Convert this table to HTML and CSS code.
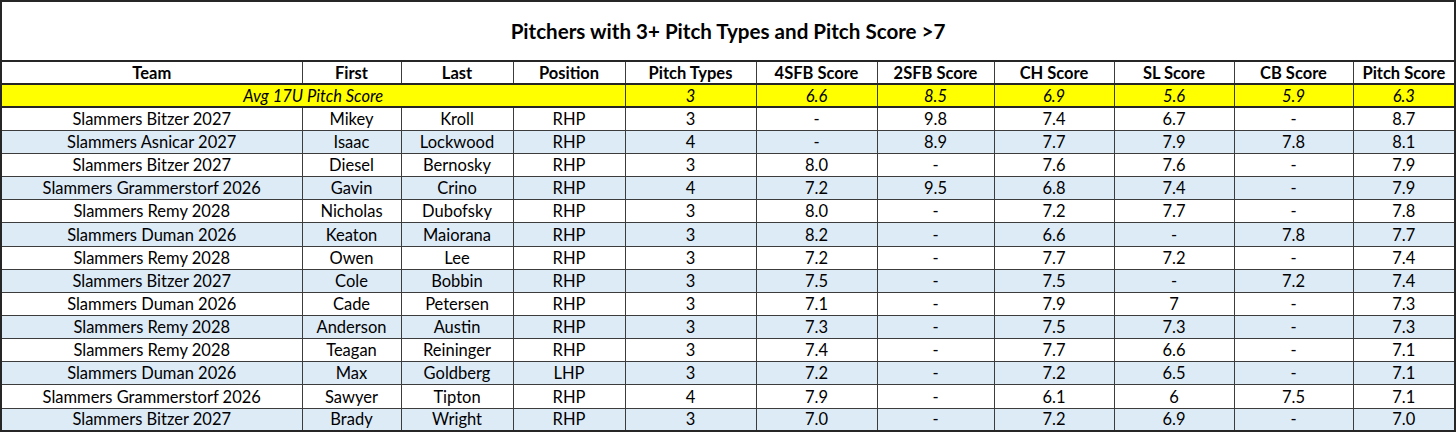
FILE: index.html
```html
<!DOCTYPE html>
<html>
<head>
<meta charset="utf-8">
<link rel="stylesheet" href="styles.css">
</head>
<body>
<table class="grid">
  <colgroup>
    <col class="c-team"><col class="c-first"><col class="c-last"><col class="c-pos"><col class="c-types">
    <col class="c-4sfb"><col class="c-2sfb"><col class="c-ch"><col class="c-sl"><col class="c-cb"><col class="c-score">
  </colgroup>
  <tr class="title-row"><td colspan="11" class="title">Pitchers with 3+ Pitch Types and Pitch Score &gt;7</td></tr>
  <tr class="head-row">
    <th>Team</th><th>First</th><th>Last</th><th>Position</th><th>Pitch Types</th><th>4SFB Score</th><th>2SFB Score</th><th>CH Score</th><th>SL Score</th><th>CB Score</th><th>Pitch Score</th>
  </tr>
  <tr class="avg-row">
    <td colspan="4">Avg 17U Pitch Score</td><td>3</td><td>6.6</td><td>8.5</td><td>6.9</td><td>5.6</td><td>5.9</td><td>6.3</td>
  </tr>
  <tr><td>Slammers Bitzer 2027</td><td>Mikey</td><td>Kroll</td><td>RHP</td><td>3</td><td>-</td><td>9.8</td><td>7.4</td><td>6.7</td><td>-</td><td>8.7</td></tr>
  <tr class="alt"><td>Slammers Asnicar 2027</td><td>Isaac</td><td>Lockwood</td><td>RHP</td><td>4</td><td>-</td><td>8.9</td><td>7.7</td><td>7.9</td><td>7.8</td><td>8.1</td></tr>
  <tr><td>Slammers Bitzer 2027</td><td>Diesel</td><td>Bernosky</td><td>RHP</td><td>3</td><td>8.0</td><td>-</td><td>7.6</td><td>7.6</td><td>-</td><td>7.9</td></tr>
  <tr class="alt"><td>Slammers Grammerstorf 2026</td><td>Gavin</td><td>Crino</td><td>RHP</td><td>4</td><td>7.2</td><td>9.5</td><td>6.8</td><td>7.4</td><td>-</td><td>7.9</td></tr>
  <tr><td>Slammers Remy 2028</td><td>Nicholas</td><td>Dubofsky</td><td>RHP</td><td>3</td><td>8.0</td><td>-</td><td>7.2</td><td>7.7</td><td>-</td><td>7.8</td></tr>
  <tr class="alt"><td>Slammers Duman 2026</td><td>Keaton</td><td>Maiorana</td><td>RHP</td><td>3</td><td>8.2</td><td>-</td><td>6.6</td><td>-</td><td>7.8</td><td>7.7</td></tr>
  <tr><td>Slammers Remy 2028</td><td>Owen</td><td>Lee</td><td>RHP</td><td>3</td><td>7.2</td><td>-</td><td>7.7</td><td>7.2</td><td>-</td><td>7.4</td></tr>
  <tr class="alt"><td>Slammers Bitzer 2027</td><td>Cole</td><td>Bobbin</td><td>RHP</td><td>3</td><td>7.5</td><td>-</td><td>7.5</td><td>-</td><td>7.2</td><td>7.4</td></tr>
  <tr><td>Slammers Duman 2026</td><td>Cade</td><td>Petersen</td><td>RHP</td><td>3</td><td>7.1</td><td>-</td><td>7.9</td><td>7</td><td>-</td><td>7.3</td></tr>
  <tr class="alt"><td>Slammers Remy 2028</td><td>Anderson</td><td>Austin</td><td>RHP</td><td>3</td><td>7.3</td><td>-</td><td>7.5</td><td>7.3</td><td>-</td><td>7.3</td></tr>
  <tr><td>Slammers Remy 2028</td><td>Teagan</td><td>Reininger</td><td>RHP</td><td>3</td><td>7.4</td><td>-</td><td>7.7</td><td>6.6</td><td>-</td><td>7.1</td></tr>
  <tr class="alt"><td>Slammers Duman 2026</td><td>Max</td><td>Goldberg</td><td>LHP</td><td>3</td><td>7.2</td><td>-</td><td>7.2</td><td>6.5</td><td>-</td><td>7.1</td></tr>
  <tr><td>Slammers Grammerstorf 2026</td><td>Sawyer</td><td>Tipton</td><td>RHP</td><td>4</td><td>7.9</td><td>-</td><td>6.1</td><td>6</td><td>7.5</td><td>7.1</td></tr>
  <tr class="alt"><td>Slammers Bitzer 2027</td><td>Brady</td><td>Wright</td><td>RHP</td><td>3</td><td>7.0</td><td>-</td><td>7.2</td><td>6.9</td><td>-</td><td>7.0</td></tr>
</table>
</body>
</html>
```
FILE: styles.css
```css
html, body {
  margin: 0;
  padding: 0;
  background: #ffffff;
}
.grid {
  border-collapse: collapse;
  table-layout: fixed;
  width: 1454px;
  font-family: Lato, "Open Sans", sans-serif;
  font-size: 16.5px;
  color: #000;
  border: 2px solid #262626;
}
.c-team { width: 301px; }
.c-first { width: 99px; }
.c-last { width: 112px; }
.c-pos { width: 112px; }
.c-types { width: 131px; }
.c-4sfb { width: 121px; }
.c-2sfb { width: 117px; }
.c-ch { width: 120px; }
.c-sl { width: 120px; }
.c-cb { width: 119px; }
.c-score { width: 102px; }
.grid td, .grid th {
  border: 1px solid #3c3c3c;
  padding: 0;
  text-align: center;
  vertical-align: middle;
  white-space: nowrap;
  overflow: hidden;
}
.grid tr { height: 23.15px; }
.title-row { height: 60px !important; }
.grid .title {
  font-weight: bold;
  font-size: 20.6px;
  border-bottom: 2px solid #262626;
}
.head-row th {
  font-weight: bold;
  border-bottom: 2px solid #262626;
}
.avg-row { height: 24px; }
.avg-row td {
  background: #ffff00;
  font-style: italic;
  border-bottom: 2px solid #262626;
}
.alt td { background: #ddebf7; }
```
